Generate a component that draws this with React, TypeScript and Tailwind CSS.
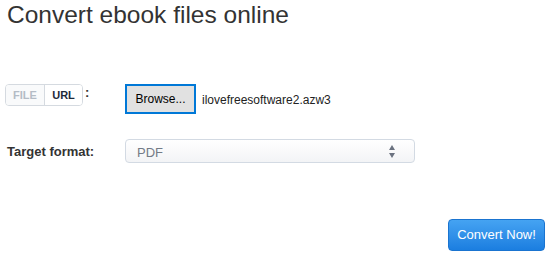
import { useState } from "react";

export default function App() {
  const [mode, setMode] = useState("file");
  const [format, setFormat] = useState("PDF");

  return (
    <div className="w-[549px] h-[255px] bg-white text-[#333] font-['Liberation_Sans',Arial,sans-serif]">
      <h1 className="pl-[7px] text-[24.5px] leading-[30px] font-normal text-[#333]">Convert ebook files online</h1>

      <div className="mt-[54px] flex items-start">
        <div className="w-[125px] flex items-start pl-[5px]">
          <div className="flex h-[22px] border border-[#d5dae0] rounded-[4px] overflow-hidden text-[11px] font-bold leading-[20px]">
            <button
              onClick={() => setMode("file")}
              className="w-[39px] text-center text-[#b4bcc6] bg-[#f9fafb] border-r border-[#d5dae0]"
            >
              FILE
            </button>
            <button
              onClick={() => setMode("url")}
              className="w-[37px] text-center text-[#1d2a3a] bg-white"
            >
              URL
            </button>
          </div>
          <span className="ml-[2px] mt-[1px] text-[13px] font-bold leading-[16px] text-[#333]">:</span>
        </div>

        <button className="w-[71px] h-[30px] border-2 border-[#0078d7] bg-[#e1e1e1] text-[12px] text-black leading-[26px]">
          Browse...
        </button>
        <span className="ml-[6px] self-center mt-[2px] text-[12px] text-[#222]">ilovefreesoftware2.azw3</span>
      </div>

      <div className="mt-[25px] flex items-center">
        <label className="w-[125px] pl-[7px] text-[13px] font-bold text-[#333] self-start mt-[3px]">Target format:</label>
        <div className="relative w-[290px] h-[24px] border border-[#d3dae3] rounded-[4px] bg-gradient-to-b from-white to-[#f3f4f6]">
          <select
            value={format}
            onChange={(e) => setFormat(e.target.value)}
            className="appearance-none w-full h-full bg-transparent pl-[11px] text-[13px] text-[#737b87] outline-none"
          >
            <option>PDF</option>
            <option>EPUB</option>
            <option>MOBI</option>
          </select>
          <svg className="absolute right-[19px] top-[5px] pointer-events-none" width="6" height="13" viewBox="0 0 6 13">
            <path d="M3 0L6 5H0Z" fill="#6b7280" />
            <path d="M0 8H6L3 13Z" fill="#6b7280" />
          </svg>
        </div>
      </div>

      <div className="mt-[56px] flex justify-end pr-[4px]">
        <button className="w-[97px] h-[32px] rounded-[4px] border border-[#1a74d0] bg-gradient-to-b from-[#45a3f2] to-[#1b7ee0] text-white text-[13px]">
          Convert Now!
        </button>
      </div>
    </div>
  );
}
